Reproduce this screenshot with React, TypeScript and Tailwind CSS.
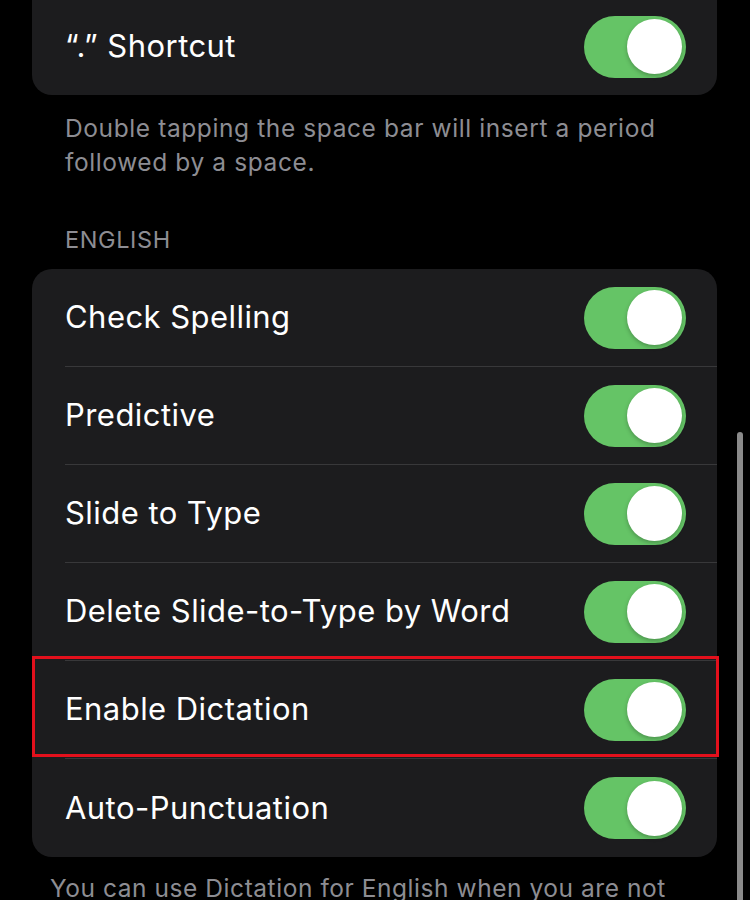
import React from "react";

function Toggle() {
  return (
    <div className="w-[102px] h-[62px] rounded-full bg-[#65c466] flex items-center justify-end pr-[4px] shrink-0">
      <div className="w-[55px] h-[55px] rounded-full bg-white shadow-[0_2px_4px_rgba(0,0,0,0.25)]" />
    </div>
  );
}

function Row({ label, last }: { label: string; last?: boolean }) {
  return (
    <div className="flex h-[98px] pl-[33px]">
      <div
        className={
          "flex flex-1 items-center justify-between pr-[31px] " +
          (last ? "" : "border-b border-[#38383a]")
        }
      >
        <span className="text-[31px] text-white tracking-[0.45px]">{label}</span>
        <Toggle />
      </div>
    </div>
  );
}

export default function App() {
  const rows = [
    "Check Spelling",
    "Predictive",
    "Slide to Type",
    "Delete Slide-to-Type by Word",
    "Enable Dictation",
    "Auto-Punctuation",
  ];
  return (
    <div
      className="relative w-[750px] h-[900px] bg-black overflow-hidden"
      style={{ fontFamily: "Inter, 'Noto Sans', sans-serif" }}
    >
      <div className="ml-[32px] w-[685px] flex flex-col">
        <div className="-mt-[2px] h-[97px] rounded-b-[20px] bg-[#1c1c1e] flex items-center justify-between pl-[33px] pr-[31px]">
          <span className="text-[31px] text-white tracking-[0.45px]">“.” Shortcut</span>
          <Toggle />
        </div>
        <p className="mt-[16px] pl-[33px] pr-[20px] text-[24.5px] leading-[34px] tracking-[0.6px] text-[#8d8d93]">
          Double tapping the space bar will insert a period followed by a space.
        </p>
        <div className="mt-[47px] pl-[33px] text-[23.5px] leading-[28px] tracking-[0.6px] text-[#8d8d93]">ENGLISH</div>
        <div className="relative mt-[15px] rounded-[20px] bg-[#1c1c1e]">
          {rows.map((r, i) => (
            <Row key={r} label={r} last={i === rows.length - 1} />
          ))}
          <div className="absolute left-0 top-[387px] w-[687px] h-[101px] border-[3px] border-[#e3101c] pointer-events-none" />
        </div>
        <p className="mt-[14px] pl-[18px] text-[24.5px] leading-[34px] tracking-[0.55px] text-[#8d8d93] whitespace-nowrap">
          You can use Dictation for English when you are not
        </p>
      </div>
      <div className="absolute left-[737px] top-[432px] w-[6px] h-[480px] rounded-full bg-[#8a8a8a]" />
    </div>
  );
}
